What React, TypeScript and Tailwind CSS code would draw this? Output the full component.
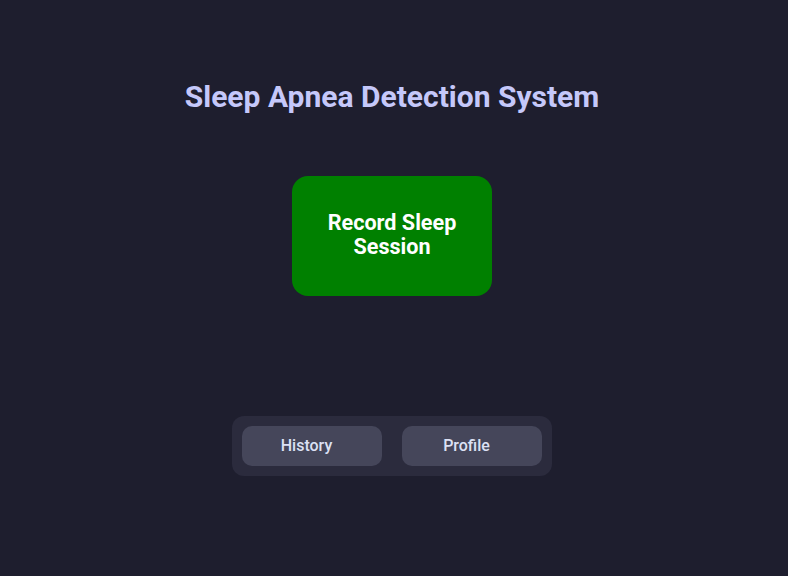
export default function App() {
  return (
    <div
      className="min-h-screen w-full bg-[#1e1e2e] flex flex-col items-center pr-1"
      style={{ fontFamily: 'Roboto, "Liberation Sans", sans-serif' }}
    >
      <h1 className="mt-[79px] h-[36px] text-[30px] leading-[36px] font-bold text-[#c5c8fa]">
        Sleep Apnea Detection System
      </h1>

      <button className="mt-[61px] w-[200px] h-[120px] rounded-2xl bg-[#008000] text-white text-[21.6px] leading-[24px] font-bold px-6 pb-0.5">
        Record Sleep Session
      </button>

      <nav className="mt-[120px] w-[320px] p-[10px] flex gap-5 rounded-xl bg-[#2b2b3d]">
        <button className="w-[140px] h-10 pr-[11px] rounded-[10px] bg-[#45465a] text-[#dce1f4] text-base font-medium">
          History
        </button>
        <button className="w-[140px] h-10 pr-[11px] rounded-[10px] bg-[#45465a] text-[#dce1f4] text-base font-medium">
          Profile
        </button>
      </nav>
    </div>
  );
}
